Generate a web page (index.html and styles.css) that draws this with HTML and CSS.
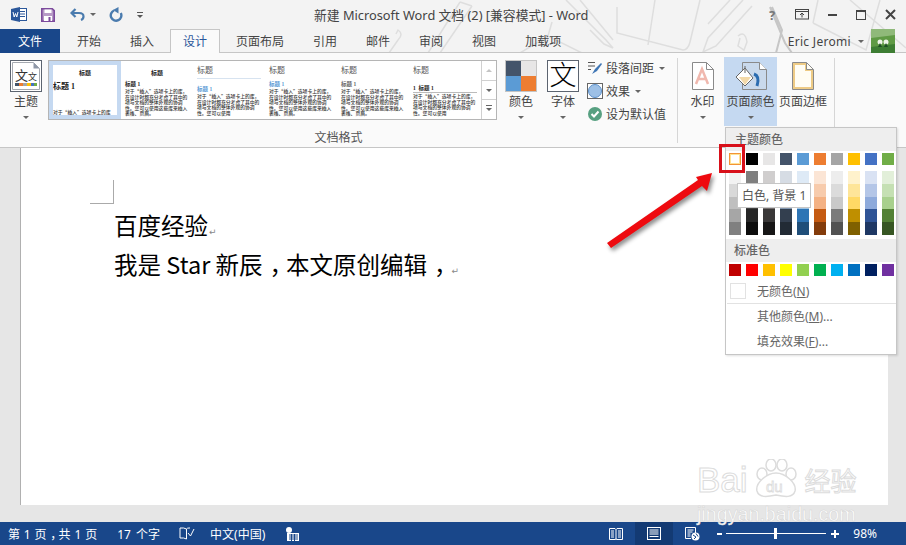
FILE: index.html
```html
<!DOCTYPE html>
<html lang="en">
<head>
    <meta charset="UTF-8">
    <meta name="viewport" content="width=device-width, initial-scale=1.0">
    <title>新建 Microsoft Word 文档 (2) [兼容模式] - Word</title>
    <link rel="stylesheet" href="styles.css">
</head>
<body>
<div class="app">
    <!-- doodles behind the title bar -->
    <svg class="doodles" width="906" height="53" viewBox="0 0 906 53" fill="none" stroke="#dedede" stroke-width="1.5">
        <path d="M460 2 L428 53 M472 6 L440 53 M460 2 L472 6"/>
        <path d="M389 53 L398 40 Q404 34 398 30 L396 34"/>
        <path d="M520 53 L548 36 L582 53 M548 36 L552 22"/>
        <path d="M566 0 L606 40 L613 48 L604 44 L590 30 M580 0 L613 40"/>
        <path d="M617 7 L617 33 L683 50 Q688 50 690 42 L700 0 M655 0 L648 45"/>
        <path d="M743 0 L708 38 L703 52 L716 46 L752 6 M730 0 L708 24"/>
        <path d="M738 36 Q745 30 747 42 L744 50 L738 46 L740 38"/>
        <path d="M770 7 L785 43 L792 53 M772 7 L782 30 L776 53" stroke="#c6c6c6" stroke-width="2"/>
        <path d="M813 23 L866 50 L880 0 M818 0 L813 23 M850 0 L906 48"/>
    </svg>

    <header class="titlebar">
        <div class="qat">
            <svg class="qat-word" width="16" height="15" viewBox="0 0 16 15">
                <rect x="6" y="1.500" width="9.500" height="12" fill="#fff" stroke="#2b579a"/>
                <path d="M9 4.500h5M9 7h5M9 9.500h5" stroke="#2b579a"/>
                <path d="M0 2 L9 0 V15 L0 13z" fill="#2b579a"/>
                <path d="M2 5 L3.200 10 L4.500 6.500 L5.800 10 L7 5" stroke="#fff" fill="none"/>
            </svg>
            <svg class="qat-save" width="14" height="14" viewBox="0 0 14 14">
                <path d="M.8.8h10.500l1.900 1.900v10.500H.8z" fill="#b79ac6" stroke="#7c4a9c" stroke-width="1.600"/>
                <rect x="3.500" y="1.500" width="7" height="3.500" fill="#fff"/>
                <rect x="3" y="8" width="8" height="5" fill="#fff"/>
                <rect x="7.500" y="9" width="2" height="4" fill="#7c4a9c"/>
            </svg>
            <svg class="qat-undo" width="15" height="13" viewBox="0 0 15 13" fill="none" stroke="#4a7bae" stroke-width="2.200">
                <path d="M5.500 1 L1.500 5 L5.500 9"/>
                <path d="M2 5 H9 Q13.500 5 13.500 8.500 Q13.500 11 11 12"/>
            </svg>
            <span class="caret qat-caret"></span>
            <svg class="qat-redo" width="14" height="15" viewBox="0 0 14 15" fill="none" stroke="#4a7bae" stroke-width="2.400">
                <path d="M5 3.500 A5.300 5.300 0 1 0 11.800 6"/>
                <path d="M9.500 0 V6.500 L4 3z" fill="#4a7bae" stroke="none"/>
            </svg>
            <span class="qat-more"></span>
        </div>
        <div class="doc-title">新建 Microsoft Word 文档 (2) [兼容模式] - Word</div>
        <div class="window-btns">
            <span class="help">?</span>
            <svg width="14" height="11" viewBox="0 0 14 11" fill="none" stroke="#444"><rect x=".5" y=".5" width="13" height="9.500"/><path d="M.5 2.500h13M7 8.500V4M5 6l2-2 2 2"/></svg>
            <span class="win-min"></span>
            <span class="win-max"></span>
            <svg width="11" height="11" viewBox="0 0 11 11" stroke="#444" stroke-width="2"><path d="M1 1l9 9M10 1l-9 9"/></svg>
        </div>
    </header>

    <nav class="tabs">
        <a class="tab tab-file">文件</a>
        <a class="tab">开始</a>
        <a class="tab">插入</a>
        <a class="tab tab-active">设计</a>
        <a class="tab">页面布局</a>
        <a class="tab">引用</a>
        <a class="tab">邮件</a>
        <a class="tab">审阅</a>
        <a class="tab">视图</a>
        <a class="tab">加载项</a>
        <div class="user">
            <span class="user-name">Eric Jeromi</span>
            <span class="caret"></span>
            <svg class="avatar" width="24" height="24" viewBox="0 0 24 24">
                <rect width="24" height="24" fill="#5f9a45"/>
                <path d="M0 0h24v6L0 9z" fill="#8fb97a"/>
                <path d="M0 18L24 15V24H0z" fill="#3d7d33"/>
                <circle cx="9" cy="13" r="2.500" fill="#eef4e8"/>
                <circle cx="15" cy="13" r="2.500" fill="#eef4e8"/>
                <path d="M7 18l2-4 2 4zM13 18l2-4 2 4z" fill="#1f4f25"/>
            </svg>
        </div>
    </nav>

    <section class="ribbon">
        <div class="group group-format">
            <div class="group-body">
                <button class="big big-theme">
                    <svg width="32" height="32" viewBox="0 0 32 32">
                        <rect x=".5" y=".5" width="31" height="31" fill="#fff" stroke="#5c6470"/>
                        <path d="M2.500 2.500h21l6 6v21h-27z" fill="#fff" stroke="#a5a9b0"/>
                        <path d="M23.500 2.500v6h6z" fill="#8f98a8"/>
                        <text x="5" y="20" class="ico-text ico-lg">文</text>
                        <text x="18" y="20" class="ico-text ico-sm">文</text>
                        <path d="M5 23h4v3H5z" fill="#44546a"/><path d="M9 23h4v3H9z" fill="#ed7d31"/><path d="M13 23h4v3h-4z" fill="#a5a5a5"/><path d="M17 23h4v3h-4z" fill="#ffc000"/><path d="M21 23h3v3h-3z" fill="#4472c4"/><path d="M24 23h3v3h-3z" fill="#70ad47"/>
                    </svg>
                    <span class="big-label">主题</span>
                    <span class="caret"></span>
                </button>

                <div class="gallery">
                    <div class="thumbs">
                        <div class="thumb thumb-on">
                            <p class="th-title th-center">标题</p>
                            <p class="th-h1-big">标题 1</p>
                            <p class="th-body">对于“插入”选项卡上的库</p>
                        </div>
                        <div class="thumb">
                            <p class="th-title th-center">标题</p>
                            <p class="th-h1">标题 1</p>
                            <p class="th-body">对于“插入”选项卡上的库，在设计时都充分考虑了其中的项与文档的整体外观的协调性。您可以使用这些库来插入表格、页眉。</p>
                        </div>
                        <div class="thumb">
                            <p class="th-title th-lg th-blue-rule">标题</p>
                            <p class="th-h1 th-blue">标题 1</p>
                            <p class="th-body">对于“插入”选项卡上的库，在设计时都充分考虑了其中的项与文档的整体外观的协调性。您可以使用</p>
                        </div>
                        <div class="thumb">
                            <p class="th-title th-lg">标题</p>
                            <p class="th-h1 th-blue">标题 1</p>
                            <p class="th-body">对于“插入”选项卡上的库，在设计时都充分考虑了其中的项与文档的整体外观的协调性。您可以使用这些库来插入表格、页眉。</p>
                        </div>
                        <div class="thumb">
                            <p class="th-title th-lg">标题</p>
                            <p class="th-h1 th-grey">标题 1</p>
                            <p class="th-body">对于“插入”选项卡上的库，在设计时都充分考虑了其中的项与文档的整体外观的协调性。您可以使用这些库来插入表格、页眉。</p>
                        </div>
                        <div class="thumb">
                            <p class="th-title th-lg">标题</p>
                            <p class="th-h1 th-rule">1&nbsp; 标题 1</p>
                            <p class="th-body">对于“插入”选项卡上的库，在设计时都充分考虑了其中的项与文档的整体外观的协调性。您可以使用</p>
                        </div>
                    </div>
                    <div class="gallery-scroll">
                        <span class="scroll-btn"><i class="tri-up"></i></span>
                        <span class="scroll-btn"><i class="tri-down"></i></span>
                        <span class="scroll-btn"><i class="tri-more"></i></span>
                    </div>
                </div>

                <button class="big big-colors">
                    <span class="color-quad">
                        <i class="q1"></i><i class="q2"></i><i class="q3"></i><i class="q4"></i>
                    </span>
                    <span class="big-label">颜色</span>
                    <span class="caret"></span>
                </button>
                <button class="big big-fonts">
                    <span class="font-box">文</span>
                    <span class="big-label">字体</span>
                    <span class="caret"></span>
                </button>

                <div class="small-stack">
                    <div class="small-item">
                        <svg width="16" height="14" viewBox="0 0 16 14" fill="none"><path d="M1 1.500h7M1 5h7M1 8.500h3" stroke="#555"/><path d="M5 13l3-5 6-6 1 1-5 7z" fill="#3f76b5"/></svg>
                        <span>段落间距</span><span class="caret"></span>
                    </div>
                    <div class="small-item">
                        <svg width="16" height="16" viewBox="0 0 16 16"><rect x=".5" y=".5" width="15" height="15" fill="#fff" stroke="#666"/><circle cx="8" cy="8" r="6.500" fill="#9dc0e6" stroke="#5b8fc9"/></svg>
                        <span>效果</span><span class="caret"></span>
                    </div>
                    <div class="small-item">
                        <svg width="16" height="16" viewBox="0 0 16 16"><circle cx="8" cy="8" r="7" fill="#57a081"/><path d="M4.500 8l2.500 2.500 4.500-5" fill="none" stroke="#fff" stroke-width="2"/></svg>
                        <span>设为默认值</span>
                    </div>
                </div>
            </div>
            <div class="group-label">文档格式</div>
        </div>

        <div class="group group-bg">
            <button class="big big-mark">
                <svg width="22" height="28" viewBox="0 0 22 28" fill="none">
                    <path d="M.5.500h14l7 7v20H.500z" fill="#fff" stroke="#8a8a8a"/>
                    <path d="M14.500.500v7h7" stroke="#8a8a8a"/>
                    <path d="M4 22L10 7l6 15M6 17h8" stroke="#f0b8ae" stroke-width="2.500"/>
                </svg>
                <span class="big-label">水印</span>
                <span class="caret"></span>
            </button>
            <button class="big big-pagecolor">
                <svg width="32" height="29" viewBox="0 0 32 29" fill="none">
                    <path d="M7.500.500h17l7 7v20h-24z" fill="#c9d9ec" stroke="#8a8a8a"/>
                    <path d="M24.500.500v7h7" fill="#fff" stroke="#8a8a8a"/>
                    <path d="M10 6L1 15l9 9 8-8z" fill="#fff" stroke="#666"/>
                    <path d="M4 15h12l-6 8z" fill="#f3d9a8"/>
                    <path d="M10 4v7" stroke="#666"/>
                    <path d="M19 12q6 2 3 12" stroke="#2b6cb0" stroke-width="3"/>
                </svg>
                <span class="big-label">页面颜色</span>
                <span class="caret"></span>
            </button>
            <button class="big big-border">
                <svg width="22" height="28" viewBox="0 0 22 28" fill="none">
                    <path d="M.5.500h14l7 7v20H.500z" fill="#fffdf4" stroke="#8a8a8a"/>
                    <path d="M2 2h12v6h6v18H2z" stroke="#eecb85" stroke-width="2"/>
                    <path d="M14.500.500v7h7" stroke="#8a8a8a"/>
                </svg>
                <span class="big-label">页面边框</span>
            </button>
        </div>
    </section>

    <main class="workspace">
        <article class="page">
            <div class="crop-mark"></div>
            <p class="doc-line">百度经验<span class="pilcrow">↵</span></p>
            <p class="doc-line">我是 Star 新辰<span class="comma">，</span>本文原创编辑<span class="comma">，</span><span class="pilcrow">↵</span></p>
        </article>
    </main>

    <footer class="statusbar">
        <span class="st-pages">第 1 页<span class="comma">，</span>共 1 页</span>
        <span class="st-words">17 个字</span>
        <svg class="st-proof" width="16" height="13" viewBox="0 0 16 13" fill="none" stroke="#fff"><path d="M7.500 2Q5 .5 1 1v10q4-.5 6.500 1zM11 1h-1q-2 0-2.500 1v10"/><path d="M9 6l2.500 3L15 2"/></svg>
        <span class="st-lang">中文(中国)</span>
        <svg class="st-macro" width="13" height="14" viewBox="0 0 13 14"><circle cx="3" cy="3" r="3" fill="#fff"/><path d="M1 6h12v8H1z" fill="#fff"/><path d="M3 8h9M3 10h9M3 12h9M5.500 7v7M8.500 7v7" stroke="#19478a"/></svg>
        <div class="st-right">
            <svg width="14" height="12" viewBox="0 0 14 12" fill="none" stroke="#fff"><path d="M.5.500h5.500l1 1 1-1h5.500v11h-5.500l-1-.5-1 .5H.500zM7 1.500v10M2 3h3M2 5h3M2 7h3M2 9h3M9 3h3M9 5h3M9 7h3M9 9h3"/></svg>
            <span class="st-view-on">
                <svg width="14" height="13" viewBox="0 0 14 13" fill="none" stroke="#fff"><rect x=".5" y=".5" width="13" height="12"/><path d="M2.500 3h9M2.500 5h9M2.500 7h9M2.500 9.500h9"/></svg>
            </span>
            <svg class="st-web" width="15" height="14" viewBox="0 0 15 14" fill="none" stroke="#fff"><path d="M.5.500h10v6M6 11.500H.500V.500M2.500 3h6M2.500 5h5M2.500 7h3M2.500 9h3"/><circle cx="10.500" cy="9.500" r="4" fill="#fff" stroke="none"/><path d="M8 8l3 2-2 2M11 6.500l2 3" stroke="#19478a"/></svg>
            <span class="zoom-minus"></span>
            <span class="zoom-track"><i class="zoom-thumb"></i></span>
            <span class="zoom-plus"></span>
            <span class="st-zoom">98%</span>
        </div>
    </footer>

    <!-- page colour dropdown -->
    <div class="menu">
        <div class="menu-head">主题颜色</div>
        <div class="swatches swatches-top">
            <i class="sw sw-current"></i><i class="sw s-black"></i><i class="sw s-e7"></i><i class="sw s-44"></i><i class="sw s-5b"></i><i class="sw s-ed"></i><i class="sw s-a5"></i><i class="sw s-ff"></i><i class="sw s-47"></i><i class="sw s-70"></i>
        </div>
        <div class="swatches swatches-tint">
            <i class="tint t0"></i><i class="tint t1"></i><i class="tint t2"></i><i class="tint t3"></i><i class="tint t4"></i><i class="tint t5"></i><i class="tint t6"></i><i class="tint t7"></i><i class="tint t8"></i><i class="tint t9"></i>
        </div>
        <div class="menu-head menu-head-std">标准色</div>
        <div class="swatches swatches-std">
            <i class="sw r1"></i><i class="sw r2"></i><i class="sw r3"></i><i class="sw r4"></i><i class="sw r5"></i><i class="sw r6"></i><i class="sw r7"></i><i class="sw r8"></i><i class="sw r9"></i><i class="sw r10"></i>
        </div>
        <div class="menu-item menu-none"><i class="none-box"></i>无颜色(<u>N</u>)</div>
        <div class="menu-sep"></div>
        <div class="menu-item">其他颜色(<u>M</u>)...</div>
        <div class="menu-item">填充效果(<u>F</u>)...</div>
    </div>
    <div class="tooltip">白色, 背景 1</div>
    <div class="red-box"></div>

    <svg class="red-arrow" width="125" height="85" viewBox="0 0 125 85">
        <path d="M7 78 L11 83 L102 21 L107 26 L112 8 L96 12 L98 15z" fill="#ee0a0f"/>
    </svg>

    <div class="watermark">
        <div class="wm-top">
            <span class="wm-bai">Bai</span>
            <svg class="wm-paw" width="46" height="40" viewBox="0 0 46 40" fill="#fff" stroke="#dcdcdc" stroke-width="1.500">
                <ellipse cx="9" cy="15" rx="5" ry="6"/>
                <ellipse cx="18" cy="6" rx="5" ry="6"/>
                <ellipse cx="29" cy="6" rx="5" ry="6"/>
                <ellipse cx="38" cy="15" rx="5" ry="6"/>
                <path d="M23 14 C32 14 44 24 42 32 C40 39 32 38 23 36 C14 38 6 39 4 32 C2 24 14 14 23 14z"/>
                <text x="13" y="33" class="wm-du">du</text>
            </svg>
            <span class="wm-cn">经验</span>
        </div>
        <div class="wm-url">jingyan.baidu.com</div>
    </div>
</div>
</body>
</html>
```

FILE: styles.css
```css
* {
    box-sizing: border-box;
}

body {
    margin: 0;
    font-family: "Noto Sans", "Noto Sans CJK SC", sans-serif;
    font-size: 12px;
    color: #444;
}

p {
    margin: 0;
}

button {
    font: inherit;
    color: inherit;
    background: none;
    border: 0;
    padding: 0;
}

.app {
    position: relative;
    width: 906px;
    height: 545px;
    display: flex;
    flex-direction: column;
    overflow: hidden;
    background: #f3f3f3;
}

.doodles {
    position: absolute;
    top: 0;
    left: 0;
}

.caret {
    display: inline-block;
    width: 0;
    height: 0;
    border-left: 3px solid transparent;
    border-right: 3px solid transparent;
    border-top: 3px solid #666;
}

/* the reference sets its full-width commas in the middle of the cell */
.comma {
    margin-left: 0.3em;
    letter-spacing: -0.3em;
}

/* title bar */
.titlebar {
    position: relative;
    height: 29px;
    display: flex;
    align-items: center;
    flex-shrink: 0;
}

.qat {
    width: 314px;
    display: flex;
    align-items: center;
    padding-left: 11px;
}

.qat-save {
    margin-left: 14px;
}

.qat-undo {
    margin-left: 15px;
}

.qat-caret {
    margin-left: 5px;
}

.qat-redo {
    margin-left: 13px;
}

.qat-more {
    margin-left: 14px;
    width: 6px;
    height: 6px;
    border-top: 1px solid #555;
    position: relative;
}

.qat-more::after {
    content: "";
    position: absolute;
    left: 0;
    top: 2px;
    border-left: 3px solid transparent;
    border-right: 3px solid transparent;
    border-top: 3px solid #555;
}

.doc-title {
    font-size: 12.800px;
    white-space: nowrap;
    color: #444;
}

.window-btns {
    margin-left: auto;
    display: flex;
    align-items: center;
    gap: 19px;
    padding-right: 10px;
}

.help {
    width: 7px;
    font-weight: 700;
    font-size: 13px;
    color: #777;
}

.win-min {
    width: 9px;
    height: 2px;
    background: #444;
}

.win-max {
    width: 10px;
    height: 10px;
    border: 1px solid #444;
    border-top-width: 2px;
}

/* tabs */
.tabs {
    position: relative;
    height: 24px;
    display: flex;
    flex-shrink: 0;
    box-shadow: inset 0 -1px 0 #c6c6c6;
}

.tab {
    padding: 0 13.500px;
    line-height: 23px;
    color: #444;
    border: 1px solid transparent;
    border-bottom: 0;
    white-space: nowrap;
}

.tab-file {
    width: 60px;
    padding: 0;
    margin-right: 2.500px;
    text-align: center;
    color: #fff;
    background: #19478a;
    border-color: #19478a;
}

.tab-active {
    margin: 0 1.500px;
    padding: 0 12px;
    color: #2b579a;
    background: #fafafa;
    border-color: #c6c6c6;
    height: 24px;
}

.user {
    margin-left: auto;
    display: flex;
    align-items: center;
    padding-right: 11px;
}

.user-name {
    margin-right: 7px;
    letter-spacing: 0.300px;
    color: #444;
}

.avatar {
    margin-left: 7px;
}

/* ribbon */
.ribbon {
    height: 95px;
    flex-shrink: 0;
    display: flex;
    background: #fafafa;
    border-bottom: 1px solid #c6c6c6;
}

.group {
    border-right: 1px solid #d6d6d6;
    margin: 5px 0 4px;
}

.group-format {
    width: 678px;
    display: flex;
    flex-direction: column;
}

.group-body {
    flex: 1;
    display: flex;
    padding: 2px 0 0 10px;
}

.group-label {
    text-align: center;
    line-height: 16px;
    margin-bottom: -3px;
    color: #555;
}

.big {
    display: flex;
    flex-direction: column;
    align-items: center;
    line-height: 16px;
}

.big .caret {
    margin-top: 6px;
}

.big-label {
    white-space: nowrap;
}

.big-theme {
    width: 32px;
}

.big-theme .big-label {
    margin-top: 2px;
}

.ico-text {
    font-family: "Noto Sans CJK SC", sans-serif;
    fill: #333;
}

.ico-lg {
    font-size: 13px;
}

.ico-sm {
    font-size: 9px;
}

/* style gallery */
.gallery {
    width: 449px;
    height: 60px;
    margin-left: 6px;
    display: flex;
    background: #fff;
    border: 1px solid #b5b5b5;
    overflow: hidden;
}

.thumbs {
    flex: 1;
    display: flex;
    min-width: 0;
}

.thumb {
    width: 72px;
    padding: 6px 4px 0;
    overflow: hidden;
    font-family: "Liberation Serif", "Noto Sans CJK SC", serif;
    color: #222;
    flex-shrink: 0;
}

.thumb-on {
    padding: 2px 0 0;
    border: 4px solid #c5d9f1;
}

.th-title {
    font-size: 6px;
    line-height: 12px;
    font-weight: 700;
}

.th-center {
    text-align: center;
}

.th-lg {
    margin-top: -2px;
    padding-bottom: 1px;
    font-size: 8px;
    font-weight: 400;
    color: #555;
}

.th-blue-rule {
    border-bottom: 1px solid #d7e3f0;
}

.th-h1-big {
    font-size: 8px;
    line-height: 14px;
    font-weight: 700;
    margin: 1px 0 15px;
}

.th-h1 {
    font-size: 5.500px;
    line-height: 8px;
    font-weight: 700;
    margin-top: 1px;
    white-space: nowrap;
}

.th-lg + .th-h1 {
    margin-top: 2px;
}

.th-blue-rule + .th-h1 {
    margin-top: 6px;
}

.th-lg + .th-rule {
    margin-top: 6px;
    border-bottom: 1px solid #bbb;
}

.th-blue {
    color: #5b9bd5;
}

.th-grey {
    color: #666;
}

.th-body {
    font-family: "Noto Sans CJK SC", sans-serif;
    font-size: 4.800px;
    line-height: 5.600px;
    font-weight: 500;
    word-break: break-all;
    color: #333;
}

.gallery-scroll {
    width: 15px;
    display: flex;
    flex-direction: column;
    border-left: 1px solid #d0d0d0;
    flex-shrink: 0;
}

.scroll-btn {
    flex: 1;
    display: flex;
    align-items: center;
    justify-content: center;
    border-bottom: 1px solid #d0d0d0;
}

.scroll-btn:last-child {
    border-bottom: 0;
}

.tri-up {
    border-left: 3px solid transparent;
    border-right: 3px solid transparent;
    border-bottom: 3px solid #c4c4c4;
}

.tri-down,
.tri-more {
    border-left: 3px solid transparent;
    border-right: 3px solid transparent;
    border-top: 3px solid #666;
}

.tri-more {
    position: relative;
}

.tri-more::before {
    content: "";
    position: absolute;
    left: -3px;
    top: -6px;
    width: 6px;
    height: 1px;
    background: #666;
}

/* colours and fonts */
.big-colors {
    width: 32px;
    margin-left: 8px;
}

.color-quad {
    width: 32px;
    height: 32px;
    display: grid;
    grid-template-columns: 1fr 1fr;
    grid-template-rows: 1fr 1fr;
    border: 1px solid #c4c4c4;
    margin-bottom: 1px;
}

.q1 {
    background: #44546a;
}

.q2 {
    background: #e7e6e6;
}

.q3 {
    background: #5b9bd5;
}

.q4 {
    background: #ed7d31;
}

.big-colors .big-label,
.big-fonts .big-label {
    margin-top: 1px;
}

.big-fonts {
    width: 32px;
    margin-left: 10px;
}

.font-box {
    width: 32px;
    height: 32px;
    border: 1px solid #5c6470;
    background: #fff;
    color: #000;
    font-size: 27px;
    font-weight: 300;
    line-height: 28px;
    text-align: center;
    margin-bottom: 1px;
}

.small-stack {
    margin-left: 8px;
    display: flex;
    flex-direction: column;
    gap: 7px;
}

.small-item {
    display: flex;
    align-items: center;
    height: 16px;
    gap: 3px;
    white-space: nowrap;
}

.small-item .caret {
    margin-left: 2px;
}

/* page background group */
.group-bg {
    width: 157px;
    display: flex;
    padding-left: 6px;
}

.big-mark {
    width: 37px;
    padding-top: 4px;
}

.big-mark .big-label,
.big-border .big-label {
    margin-top: 4px;
}

.big-pagecolor {
    width: 53px;
    height: 69px;
    margin: -1px 0 0 3px;
    padding-top: 5px;
    background: #c5d9f1;
}

.big-pagecolor .big-label {
    margin-top: 3px;
}

.big-border {
    width: 50px;
    padding-top: 4px;
    margin-left: 1px;
}

/* document area */
.workspace {
    flex: 1;
    min-height: 0;
    background: #e6e6e6;
    padding: 0 18px 17px 21px;
}

.page {
    height: 100%;
    background: #fff;
    padding: 55px 0 0 93px;
    box-shadow: -1px 0 0 #b0b0b0;
    color: #000;
}

.crop-mark {
    width: 24px;
    height: 24px;
    margin: -23px 0 2px -24px;
    border-right: 1px solid #aaa;
    border-bottom: 1px solid #aaa;
}

.doc-line {
    font-family: "Noto Sans CJK SC", sans-serif;
    font-size: 23.500px;
    line-height: 39px;
    white-space: nowrap;
}

.pilcrow {
    font-family: "DejaVu Sans", sans-serif;
    font-size: 9px;
    line-height: 1;
    color: #888;
    margin-left: 1px;
}

/* status bar */
.statusbar {
    height: 23px;
    flex-shrink: 0;
    display: flex;
    align-items: center;
    background: #19478a;
    color: #fff;
    padding-left: 8px;
}

.st-pages {
    word-spacing: 0.750px;
}

.st-words {
    margin-left: 20px;
    word-spacing: 2px;
}

.st-proof {
    margin-left: 19px;
}

.st-lang {
    margin-left: 15px;
}

.st-macro {
    margin-left: 21px;
}

.st-right {
    margin-left: auto;
    height: 100%;
    display: flex;
    align-items: center;
    padding-right: 29px;
}

.st-view-on {
    width: 38px;
    height: 100%;
    margin-left: 12px;
    display: flex;
    align-items: center;
    justify-content: center;
    background: #133a73;
}

.st-web {
    margin-left: 12px;
}

.zoom-minus {
    width: 5px;
    height: 2px;
    margin-left: 17px;
    background: #fff;
}

.zoom-track {
    position: relative;
    width: 100px;
    height: 1px;
    margin-left: 4px;
    background: #fff;
}

.zoom-thumb {
    position: absolute;
    left: 48px;
    top: -5px;
    width: 3px;
    height: 11px;
    background: #fff;
}

.zoom-plus {
    position: relative;
    width: 8px;
    height: 2px;
    margin-left: 5px;
    background: #fff;
}

.zoom-plus::after {
    content: "";
    position: absolute;
    left: 3px;
    top: -3px;
    width: 2px;
    height: 8px;
    background: #fff;
}

.st-zoom {
    margin-left: 14px;
}

/* dropdown */
.menu {
    position: absolute;
    left: 725px;
    top: 127px;
    width: 172px;
    height: 228px;
    background: #fff;
    border: 1px solid #c6c6c6;
    box-shadow: 1px 1px 2px rgba(0, 0, 0, 0.12);
    color: #666;
}

.menu-head {
    height: 23px;
    padding-left: 9px;
    line-height: 23px;
    background: #eee;
    color: #666;
    font-weight: 500;
}

.menu-head-std {
    margin-top: 4px;
    padding-left: 8px;
}

.swatches {
    display: flex;
    gap: 5px;
    padding-left: 3px;
}

.swatches-top {
    padding-top: 2px;
}

.swatches-tint {
    padding-top: 6px;
}

.swatches-std {
    padding-top: 2px;
}

.sw {
    width: 12px;
    height: 12px;
    display: block;
}

.sw-current {
    border: 1px solid #f29436;
    box-shadow: inset 0 0 0 1px #ffe294;
    background: #fff;
}

.s-black { background: #000; }
.s-e7 { background: #e7e6e6; }
.s-44 { background: #44546a; }
.s-5b { background: #5b9bd5; }
.s-ed { background: #ed7d31; }
.s-a5 { background: #a5a5a5; }
.s-ff { background: #ffc000; }
.s-47 { background: #4472c4; }
.s-70 { background: #70ad47; }

.tint {
    width: 12px;
    height: 64px;
    display: block;
    background: linear-gradient(var(--a) 20%, var(--b) 20% 40%, var(--c) 40% 60%, var(--d) 60% 80%, var(--e) 80%);
}

.t0 { --a: #f2f2f2; --b: #d9d9d9; --c: #bfbfbf; --d: #a6a6a6; --e: #808080; }
.t1 { --a: #7f7f7f; --b: #595959; --c: #404040; --d: #262626; --e: #0d0d0d; }
.t2 { --a: #d0cece; --b: #aeabab; --c: #757070; --d: #3a3838; --e: #171616; }
.t3 { --a: #d6dce4; --b: #acb9ca; --c: #8497b0; --d: #333f4f; --e: #222b35; }
.t4 { --a: #deeaf6; --b: #bdd7ee; --c: #9cc3e5; --d: #2e75b5; --e: #1f4e79; }
.t5 { --a: #fbe5d5; --b: #f7cbac; --c: #f4b183; --d: #c55a11; --e: #833c0b; }
.t6 { --a: #ededed; --b: #dbdbdb; --c: #c9c9c9; --d: #7b7b7b; --e: #525252; }
.t7 { --a: #fff2cc; --b: #fee599; --c: #ffd965; --d: #bf8f00; --e: #7f6000; }
.t8 { --a: #d9e2f3; --b: #b4c6e7; --c: #8eaadb; --d: #2f5496; --e: #1f3864; }
.t9 { --a: #e2efd9; --b: #c5e0b3; --c: #a8d08d; --d: #538135; --e: #375623; }

.r1 { background: #c00000; }
.r2 { background: #ff0000; }
.r3 { background: #ffc000; }
.r4 { background: #ffff00; }
.r5 { background: #92d050; }
.r6 { background: #00b050; }
.r7 { background: #00b0f0; }
.r8 { background: #0070c0; }
.r9 { background: #002060; }
.r10 { background: #7030a0; }

.menu-item {
    height: 25px;
    line-height: 25px;
    padding-left: 31px;
    white-space: nowrap;
}

.menu-none {
    position: relative;
    height: 24px;
    margin-top: 3px;
}

.none-box {
    position: absolute;
    left: 4px;
    top: 4px;
    width: 16px;
    height: 16px;
    border: 1px solid #e2e2e2;
}

.menu-sep {
    height: 1px;
    background: #e2e2e2;
    margin: 0 0 0 1px;
}

.tooltip {
    position: absolute;
    left: 737px;
    top: 183px;
    width: 74px;
    height: 25px;
    line-height: 23px;
    padding-left: 4px;
    background: #fff;
    border: 1px solid #c6c6c6;
    color: #555;
    white-space: nowrap;
}

.red-box {
    position: absolute;
    left: 719px;
    top: 144px;
    width: 26px;
    height: 29px;
    border: 3px solid #d8101a;
}

.red-arrow {
    position: absolute;
    left: 600px;
    top: 165px;
    filter: drop-shadow(2px 3px 2px rgba(0, 0, 0, 0.45));
}

/* watermark */
.watermark {
    position: absolute;
    left: 697px;
    top: 459px;
    width: 162px;
    white-space: nowrap;
}

.wm-top {
    display: flex;
    align-items: flex-end;
    height: 40px;
    color: #fff;
    -webkit-text-stroke: 1px #dcdcdc;
}

.wm-bai {
    font-family: "Liberation Sans", sans-serif;
    font-size: 35px;
    line-height: 38px;
}

.wm-paw {
    margin-left: 5px;
    flex-shrink: 0;
}

.wm-du {
    font-family: "Liberation Sans", sans-serif;
    font-size: 15px;
    stroke-width: 0.800;
    fill: #fff;
}

.wm-cn {
    margin-left: 6px;
    font-family: "Noto Sans CJK SC", sans-serif;
    font-size: 26px;
    line-height: 38px;
}

.wm-url {
    margin-top: 4px;
    font-family: "Liberation Sans", sans-serif;
    font-size: 19.700px;
    line-height: 22px;
    color: #fff;
    -webkit-text-stroke: 0.500px #d4d4d4;
}
```
